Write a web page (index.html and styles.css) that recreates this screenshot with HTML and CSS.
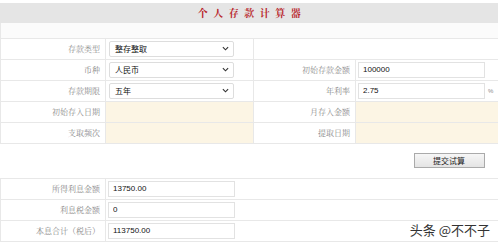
FILE: index.html
```
<!DOCTYPE html>
<html>
	<head>
		<meta charset="utf-8" />
		<title>个人存款计算器</title>
		<link rel="stylesheet" href="styles.css">
	</head>
	<body>
		<div class="calc">
			<div class="calc-title">个 人 存 款 计 算 器</div>
			<table class="calc-form">
				<colgroup>
					<col class="c1" /><col class="c2" /><col class="c3" /><col class="c4" />
				</colgroup>
				<tr class="blank"><td colspan="4"></td></tr>
				<tr>
					<th>存款类型</th>
					<td><div class="sel"><span>整存整取</span><svg viewBox="0 0 8 5" width="7" height="5"><path d="M1 1 L4 4 L7 1" fill="none" stroke="#333" stroke-width="1.3"/></svg></div></td>
					<td colspan="2"></td>
				</tr>
				<tr>
					<th>币种</th>
					<td><div class="sel"><span>人民币</span><svg viewBox="0 0 8 5" width="7" height="5"><path d="M1 1 L4 4 L7 1" fill="none" stroke="#333" stroke-width="1.3"/></svg></div></td>
					<th>初始存款金额</th>
					<td><input class="txt" type="text" value="100000" /></td>
				</tr>
				<tr>
					<th>存款期限</th>
					<td><div class="sel"><span>五年</span><svg viewBox="0 0 8 5" width="7" height="5"><path d="M1 1 L4 4 L7 1" fill="none" stroke="#333" stroke-width="1.3"/></svg></div></td>
					<th>年利率</th>
					<td><div class="with-unit"><input class="txt" type="text" value="2.75" /><span class="unit">%</span></div></td>
				</tr>
				<tr>
					<th>初始存入日期</th><td class="off"></td>
					<th>月存入金额</th><td class="off"></td>
				</tr>
				<tr>
					<th>支取频次</th><td class="off"></td>
					<th>提取日期</th><td class="off"></td>
				</tr>
				<tr class="act">
					<td colspan="3"></td>
					<td><button class="btn" type="button">提交试算</button></td>
				</tr>
				<tr>
					<th>所得利息金额</th>
					<td colspan="3"><input class="txt" type="text" value="13750.00" /></td>
				</tr>
				<tr>
					<th>利息税金额</th>
					<td colspan="3"><input class="txt" type="text" value="0" /></td>
				</tr>
				<tr>
					<th>本息合计（税后）</th>
					<td colspan="3"><input class="txt" type="text" value="113750.00" /></td>
				</tr>
			</table>
			<div class="mark">头条 @不不子</div>
		</div>
	</body>
</html>
```

FILE: styles.css
```
*{margin: 0;padding: 0;box-sizing: border-box;}
html,body{overflow: hidden;}
body{background: #fff;width: 498px;height: 246px;}
.calc
{
	position: relative;
	width: 498px;
	height: 246px;
	padding-top: 3px;
	font-family: "Noto Sans CJK SC", sans-serif;
}
.calc-title
{
	height: 20px;
	line-height: 20px;
	background: #e5e5e5;
	text-align: center;
	color: #b8262b;
	font-family: "Noto Serif CJK SC", "Noto Sans CJK SC", serif;
	font-weight: bold;
	font-size: 10px;
	letter-spacing: 1.5px;
	padding-left: 2px;
}
.calc-form
{
	width: 500px;
	border-collapse: collapse;
	table-layout: fixed;
}
.c1{width: 105px;}
.c2{width: 148px;}
.c3{width: 102px;}
.c4{width: 145px;}
.calc-form td,.calc-form th
{
	height: 21px;
	border: 1px solid #e8e8e8;
	padding: 0 2px;
	vertical-align: middle;
	font-size: 8px;
	line-height: 10px;
}
.calc-form tr:first-child td{border-top: none;}
.calc-form th
{
	text-align: right;
	padding-right: 5px;
	font-weight: normal;
	color: #8a8a8a;
	font-family: "Noto Serif CJK SC", "Noto Sans CJK SC", serif;
	white-space: nowrap;
}
.blank td{height: 15px;background: #fbfbfb;}
.off{background: #fcf5e4;}
.act td{height: 35px;border-left: none;border-right: none;}
.act td:last-child{padding-right: 16px;}
.sel
{
	display: flex;
	align-items: center;
	justify-content: space-between;
	width: 125px;
	height: 16px;
	margin-left: 1px;
	padding: 0 4px 0 5px;
	border: 1px solid #ddd;
	border-radius: 2px;
	background: #fff;
	font-size: 8px;
	color: #111;
}
.txt
{
	display: block;
	width: 127px;
	height: 16px;
	padding: 0 4px;
	border: 1px solid #e2e2e2;
	font-family: "Liberation Sans", Arial, sans-serif;
	font-size: 8px;
	color: #111;
	outline: none;
}
.with-unit
{
	display: flex;
	align-items: center;
}
.unit
{
	font-size: 6px;
	color: #888;
	margin-left: 3px;
	font-family: "Liberation Sans", sans-serif;
}
.btn
{
	display: block;
	margin-left: auto;
	width: 71px;
	height: 15px;
	border: 1px solid #aaa;
	background: linear-gradient(#f6f6f6, #e4e4e4);
	font-family: "Noto Sans CJK SC", sans-serif;
	font-size: 8px;
	line-height: 13px;
	color: #222;
}
.mark
{
	position: absolute;
	right: 8px;
	bottom: 8px;
	font-size: 13px;
	line-height: 16px;
	color: #333;
	text-shadow: 0 0 2px #fff;
}
```
